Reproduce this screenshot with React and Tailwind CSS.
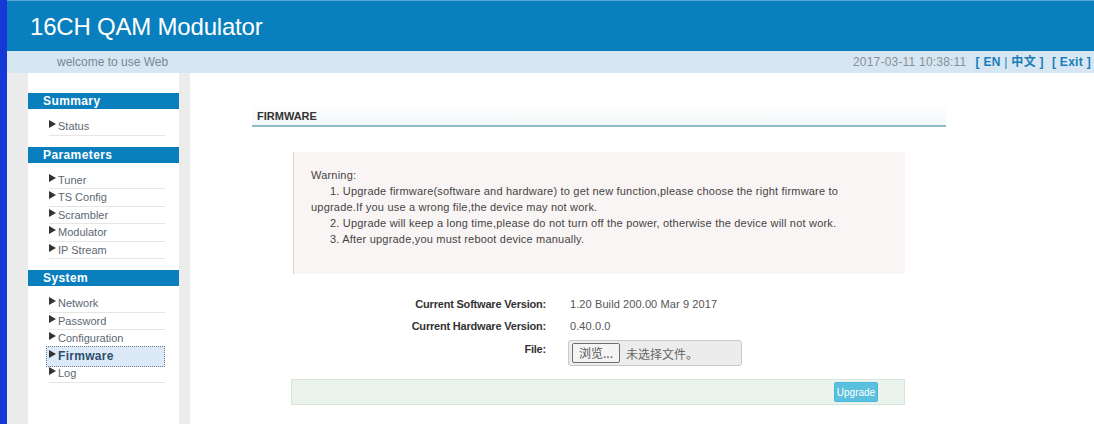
import { useState } from "react";

const menu = [
  { title: "Summary", items: ["Status"] },
  { title: "Parameters", items: ["Tuner", "TS Config", "Scrambler", "Modulator", "IP Stream"] },
  { title: "System", items: ["Network", "Password", "Configuration", "Firmware", "Log"] },
];

const Arrow = () => (
  <svg width="7" height="8" viewBox="0 0 7 8" className="relative mr-[2px] mt-[-4px] shrink-0">
    <path d="M0 0 L7 4 L0 8 Z" fill="#333" />
  </svg>
);

export default function App() {
  const [active, setActive] = useState("Firmware");

  return (
    <div className="h-[424px] w-full flex flex-col bg-white overflow-hidden font-['Liberation_Sans',Arial,sans-serif] border-l-[7px] border-[#1539d6]">
      {/* top banner */}
      <div className="h-[51px] shrink-0 bg-[#0a7fbe] border-t border-[#5aa6d6] flex items-center pl-[23px]">
        <h1 className="text-[24px] text-white tracking-[-0.2px] pt-[1px]">16CH QAM Modulator</h1>
      </div>

      {/* welcome strip */}
      <div className="h-[22px] shrink-0 bg-[#d6e6f2] flex items-center justify-between pl-[50px] pr-[3px] text-[12px]">
        <span className="text-[#7b8794]">welcome to use Web</span>
        <div className="flex items-center">
          <span className="text-[#8a9096] mr-[9px] tracking-[0.2px]">2017-03-11 10:38:11</span>
          <span className="font-bold text-[#1a7db7] tracking-[0.3px] font-['Liberation_Sans','Noto_Sans_CJK_SC',sans-serif]">
            [ <a className="cursor-pointer">EN</a> <span className="font-normal">|</span> <a className="cursor-pointer">中文</a> ]
          </span>
          <span className="font-bold text-[#1a7db7] ml-[8px] tracking-[0.3px]">[ <a className="cursor-pointer">Exit</a> ]</span>
        </div>
      </div>

      <div className="flex flex-1 min-h-0">
        {/* navigation */}
        <div className="w-[183px] shrink-0 flex bg-[#ececec]">
          <div className="ml-[21px] w-[151px] bg-white pt-[20px]">
            {menu.map((group) => (
              <div key={group.title} className="mb-[11px]">
                <div className="h-[16px] bg-[#0a7fbe] text-white font-bold text-[12px] leading-[16px] pl-[15px] tracking-[0.4px]">
                  {group.title}
                </div>
                <ul className="pt-[9px] pl-[21px] pr-[14px]">
                  {group.items.map((item) => {
                    const on = item === active;
                    return (
                      <li
                        key={item}
                        onClick={() => setActive(item)}
                        className={
                          on
                            ? "relative h-[17.5px] flex items-center cursor-pointer font-bold text-[12px] text-[#2d4d6e] tracking-[0.3px]"
                            : "h-[17.5px] flex items-center cursor-pointer text-[11px] text-[#5d6873] border-b border-[#e6e6e6]"
                        }
                      >
                        {on && (
                          <span className="absolute -top-[2px] -bottom-[2px] -left-[3px] right-0 bg-[#dceaf7] border border-dotted border-[#6c7a8a]" />
                        )}
                        <Arrow />
                        <span className="relative">{item}</span>
                      </li>
                    );
                  })}
                </ul>
              </div>
            ))}
          </div>
        </div>

        {/* firmware page */}
        <div className="flex-1 pl-[62px] pt-[30px]">
          <div className="w-[694px]">
            <div className="h-[24px] border-b-2 border-[#8fbac6] bg-gradient-to-b from-white to-[#f3f8f8] pl-[5px] pt-[5px] text-[11px] font-bold text-[#333]">
              FIRMWARE
            </div>
          </div>

          <div className="ml-[41px] mt-[25px] w-[612px] h-[122px] bg-[#faf5f5] border-l border-[#e2d2d2] pl-[17px] pt-[15px] text-[11px] tracking-[0.2px] leading-[16px] text-[#444]">
            <p>Warning:</p>
            <p className="pl-[19px]">1. Upgrade firmware(software and hardware) to get new function,please choose the right firmware to</p>
            <p>upgrade.If you use a wrong file,the device may not work.</p>
            <p className="pl-[19px]">2. Upgrade will keep a long time,please do not turn off the power, otherwise the device will not work.</p>
            <p className="pl-[19px]">3. After upgrade,you must reboot device manually.</p>
          </div>

          <div className="mt-[23px] grid grid-cols-[294px_1fr] gap-x-[24px] text-[11px] leading-[15px]">
            <div className="text-right font-bold text-[#333] h-[22px] tracking-[-0.2px]">Current Software Version:</div>
            <div className="text-[#555] h-[22px] tracking-[0.1px]">1.20 Build 200.00 Mar 9 2017</div>
            <div className="text-right font-bold text-[#333] h-[22px] tracking-[-0.2px]">Current Hardware Version:</div>
            <div className="text-[#555] h-[22px] tracking-[0.1px]">0.40.0.0</div>
            <div className="text-right font-bold text-[#333] tracking-[-0.2px] pt-[1px]">File:</div>
            <div className="-mt-[1px] -ml-[2px] w-[174px] h-[26px] bg-[#ececec] border border-[#c9c9c9] rounded-[3px] flex items-center pl-[3px]">
              <button className="h-[20px] px-[6px] bg-[#f4f4f4] border border-[#6f6f6f] rounded-[2px] text-[12px] text-[#555] font-['Noto_Sans_CJK_SC',sans-serif] leading-none">
                浏览...
              </button>
              <span className="ml-[6px] text-[#666] text-[12px] font-['Noto_Sans_CJK_SC',sans-serif]">未选择文件。</span>
            </div>
          </div>

          <div className="ml-[39px] mt-[13px] w-[614px] h-[26px] bg-[#eaf3ec] border border-[#d6e4d9] flex items-center justify-end pr-[26px]">
            <button className="h-[20px] w-[44px] bg-[#5bc0de] border border-[#46b8da] rounded-[2px] text-white text-[10px]">
              Upgrade
            </button>
          </div>
        </div>
      </div>
    </div>
  );
}
